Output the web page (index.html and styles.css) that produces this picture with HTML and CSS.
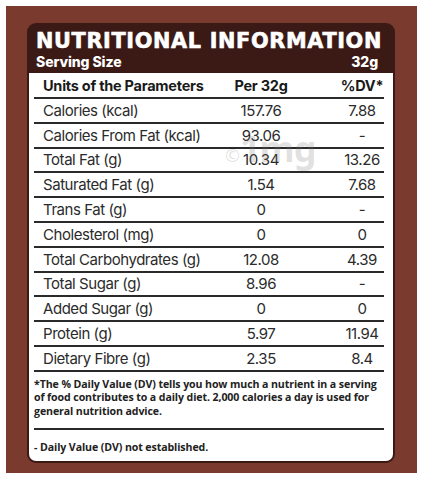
FILE: index.html
```
<!DOCTYPE html>
<html>
<head>
<meta charset="utf-8">
<link rel="stylesheet" href="styles.css">
</head>
<body>
<div class="frame">
  <div class="card">
    <div class="head">
      <div class="title">NUTRITIONAL INFORMATION</div>
      <div class="serving"><span>Serving Size</span><span>32g</span></div>
    </div>
    <div class="body">
      <div class="row th"><span class="lab">Units of the Parameters</span><span class="per">Per 32g</span><span class="dv">%DV*</span></div>
      <div class="row"><span class="lab">Calories (kcal)</span><span class="per">157.76</span><span class="dv">7.88</span></div>
      <div class="row"><span class="lab">Calories From Fat (kcal)</span><span class="per">93.06</span><span class="dv">-</span></div>
      <div class="row"><span class="lab">Total Fat (g)</span><span class="per">10.34</span><span class="dv">13.26</span></div>
      <div class="row"><span class="lab">Saturated Fat (g)</span><span class="per">1.54</span><span class="dv">7.68</span></div>
      <div class="row"><span class="lab">Trans Fat (g)</span><span class="per">0</span><span class="dv">-</span></div>
      <div class="row"><span class="lab">Cholesterol (mg)</span><span class="per">0</span><span class="dv">0</span></div>
      <div class="row"><span class="lab">Total Carbohydrates (g)</span><span class="per">12.08</span><span class="dv">4.39</span></div>
      <div class="row"><span class="lab">Total Sugar (g)</span><span class="per">8.96</span><span class="dv">-</span></div>
      <div class="row"><span class="lab">Added Sugar (g)</span><span class="per">0</span><span class="dv">0</span></div>
      <div class="row"><span class="lab">Protein (g)</span><span class="per">5.97</span><span class="dv">11.94</span></div>
      <div class="row"><span class="lab">Dietary Fibre (g)</span><span class="per">2.35</span><span class="dv">8.4</span></div>
      <p class="note">*The % Daily Value (DV) tells you how much a nutrient in a serving of food contributes to a daily diet. 2,000 calories a day is used for general nutrition advice.</p>
      <p class="note2">- Daily Value (DV) not established.</p>
      <div class="mark">©<b>1mg</b></div>
    </div>
  </div>
</div>
</body>
</html>
```
FILE: styles.css
```
html, body { margin: 0; padding: 0; background: #fff; }
.frame {
  position: relative;
  margin: 6px 0 0 6px;
  width: 411px;
  height: 467px;
  box-sizing: border-box;
  background: #7a3a2e;
  padding: 17px 0 0 21px;
}
.card {
  width: 368px;
  background: #3b1915;
  border-radius: 9px;
  padding: 0 2px 2px 2px;
  box-sizing: border-box;
}
.head {
  height: 50px;
  box-sizing: border-box;
  padding: 6px 15px 0 7px;
  color: #fff;
}
.title {
  font-family: "DejaVu Sans", sans-serif;
  font-weight: 700;
  font-size: 20.8px;
  line-height: 24px;
  letter-spacing: 0.65px;
  -webkit-text-stroke: 0.6px #fff;
  white-space: nowrap;
}
.serving {
  display: flex;
  justify-content: space-between;
  font-family: Inter, sans-serif;
  font-weight: 800;
  font-size: 14px;
  line-height: 17px;
  letter-spacing: -0.1px;
}
.body {
  position: relative;
  background: #fff;
  border-radius: 0 0 7px 7px;
  padding: 0 9px 0 5px;
  height: 388px;
  box-sizing: border-box;
  color: #222;
}
.row {
  display: flex;
  align-items: center;
  height: 24.8px;
  box-sizing: border-box;
  border-bottom: 2px solid #2a2a2a;
  font-family: Inter, sans-serif;
  font-size: 15px;
  letter-spacing: -0.45px;
  color: #2b2b2b;
}
.row.th {
  height: 26px;
  font-weight: 700;
  font-size: 14.5px;
  letter-spacing: -0.25px;
  color: #1a1a1a;
}
.lab { flex: 1; padding-left: 9px; white-space: nowrap; }
.per { width: 100px; text-align: center; }
.dv { width: 44px; margin-left: 29px; text-align: center; }
.note {
  margin: 0;
  padding: 6px 0 10px 0;
  border-bottom: 2px solid #2a2a2a;
  font-family: "Open Sans", sans-serif;
  font-weight: 700;
  font-size: 10.6px;
  line-height: 13.5px;
  letter-spacing: -0.1px;
  color: #222;
}
.note2 {
  margin: 0;
  padding-top: 11px;
  font-family: "Open Sans", sans-serif;
  font-weight: 700;
  font-size: 10.6px;
  line-height: 13px;
  letter-spacing: -0.1px;
  color: #222;
}
.mark {
  position: absolute;
  left: 196px;
  top: 58px;
  font-family: "Noto Sans", sans-serif;
  color: rgba(120, 120, 120, 0.22);
  font-size: 18px;
  line-height: 36px;
}
.mark b {
  font-size: 36px;
  font-weight: 700;
  letter-spacing: -1px;
}
```
